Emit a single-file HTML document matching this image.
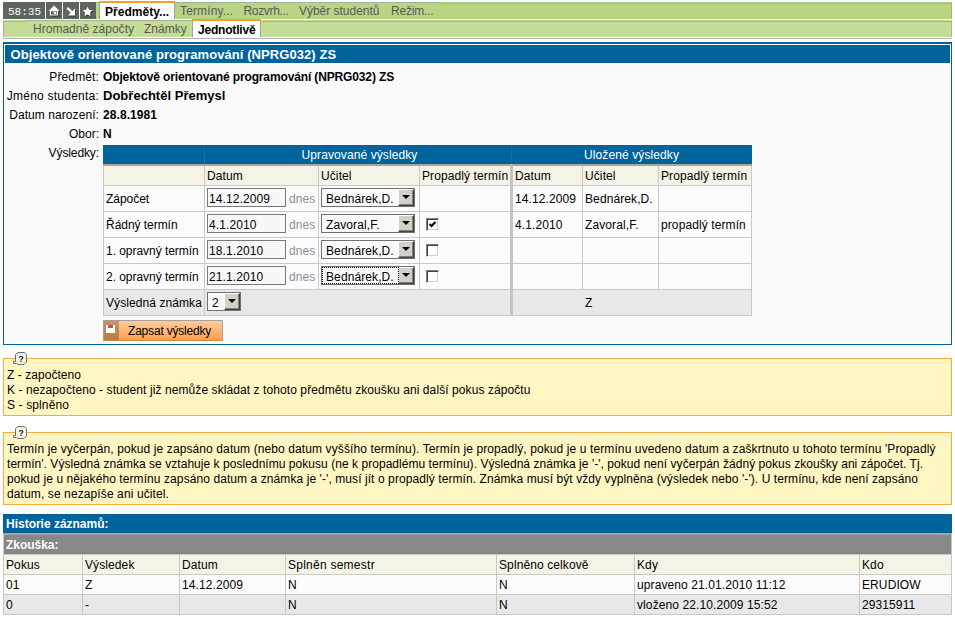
<!DOCTYPE html>
<html><head><meta charset="utf-8">
<style>
*{box-sizing:border-box;margin:0;padding:0}
html,body{width:955px;height:617px;background:#fff;overflow:hidden}
body{font-family:"Liberation Sans",sans-serif;font-size:12px;color:#000;position:relative;line-height:14px}
.abs{position:absolute}
.t{position:absolute;white-space:nowrap;line-height:14px}
.b{font-weight:bold}
/* nav */
#nav1{left:3px;top:2px;width:949px;height:17px;background:#b9d584;border-right:1px solid #9cb48c}
#nav2{left:3px;top:20px;width:949px;height:17px;background:#c4dc96;border-right:1px solid #a3bb8f}
.ib{position:absolute;top:2px;height:17px;background:#5c675c}
.navt{color:#5a5a5a;font-size:12px}
/* main box */
#box{left:3px;top:42px;width:949px;height:303px;border:1px solid #00639b;border-top-width:2px;background:#fafafa;box-shadow:inset 0 0 0 1px #fff}
#boxh{left:5px;top:45px;width:945px;height:18px;background:#00639b;outline:1px solid #fff}
/* grid */
table{border-collapse:collapse;table-layout:fixed;position:absolute}
td{border:1px solid #c8c8c8;padding:0 0 0 2px;white-space:nowrap;overflow:hidden;vertical-align:top;font-size:12px;line-height:14px;letter-spacing:0.1px}
#g1 td{height:26px;background:#fcfcfc;padding-top:6px}
#g1 tr.h td{height:19px;background:#00639b;color:#fff;text-align:center;border-color:#00639b;border-bottom-color:#aca4a0;padding:2px 0 0 0}
#g1 tr.s td{height:21px;background:#f5f2e6;padding-top:4px}
#g1 tr.l td{background:#e8e8e8}
#g1 td.sep{border-left:3px solid #c4c4c4}
.inp{display:inline-block;vertical-align:top;margin-top:-4px;width:79px;height:19px;border:1px solid #787878;background:#f8f8f8;padding:3px 0 0 1px;line-height:14px}
.dn{color:#8c8ca0;margin-left:3px}
.sel{display:inline-block;vertical-align:top;margin-top:-4px;position:relative;height:19px;border:1px solid #707070;background:#fafafa;padding:3px 0 0 4px;line-height:14px}
.sel i{position:absolute;right:0px;top:0px;width:16px;height:17px;background:#d4d0c8;border:1px solid #fff;border-right-color:#404040;border-bottom-color:#404040;box-shadow:inset -1px -1px 0 #808080}
.sel i:after{content:"";position:absolute;left:3px;top:5px;border:4px solid transparent;border-top-color:#000;border-bottom-width:0}
.cb{display:inline-block;width:13px;height:13px;border:1px solid #808080;border-right-color:#fff;border-bottom-color:#fff;box-shadow:inset 1px 1px 0 #404040,inset -1px -1px 0 #d4d0c8;background:#fff;vertical-align:top;margin:0 0 0 4px;position:relative}
/* info */
.yb{left:3px;width:949px;background:#fff6c4;border:1px solid #ffa742}
#g2 td{height:20px;padding:3px 0 0 2px}
#g2 tr.s td{background:#f5f2e6}
#g2 tr.a td{background:#fcfcfc}
#g2 tr.e td{background:#e8e8e8}
.ln{position:absolute;height:1px;background:#9db39d}
#g1 td:first-child{letter-spacing:-0.04px}
</style></head><body>


<!-- top nav -->
<div id="nav1" class="abs"></div>
<div class="ln" style="left:3px;top:2px;width:436px"></div><div class="ln" style="left:439px;top:3px;width:513px"></div>
<div class="abs" style="left:3px;top:2px;width:93px;height:17px;background:#fff"></div>
<div class="ib" style="left:3px;width:42px"></div>
<div class="ib" style="left:46px;width:16px"></div>
<div class="ib" style="left:63px;width:16px"></div>
<div class="ib" style="left:80px;width:16px"></div>
<svg class="abs" style="left:46px;top:2px" width="16" height="17" viewBox="0 0 16 17"><path d="M8.9 4.6 L14.4 10 L13 10 L13 14.6 L5 14.6 L5 10 L3.8 10 Z" fill="#2b302b"/><path d="M8.1 3.5 L13.5 9 L12.1 9 L12.1 13.6 L4 13.6 L4 9 L2.6 9 Z" fill="#fff"/><rect x="5" y="9.2" width="6" height="3.4" fill="#5c675c"/><rect x="7.8" y="9.9" width="2.4" height="2.2" fill="#fff"/></svg>
<svg class="abs" style="left:63px;top:2px" width="16" height="17" viewBox="0 0 16 17"><g transform="translate(0.8,0.9)" fill="#2b302b"><path d="M3.5 6.7 L5.2 5 L9.8 9.6 L8.1 11.3 Z"/><path d="M12.1 6.6 L12.1 13.6 L5 13.6 Z"/></g><g fill="#fff"><path d="M3.5 6.7 L5.2 5 L9.8 9.6 L8.1 11.3 Z"/><path d="M12.1 6.6 L12.1 13.6 L5 13.6 Z"/></g></svg>
<svg class="abs" style="left:80px;top:2px" width="16" height="17" viewBox="0 0 16 17"><path d="M8.40 5.70 L9.93 8.70 L13.25 9.22 L10.87 11.60 L11.40 14.93 L8.40 13.40 L5.40 14.93 L5.93 11.60 L3.55 9.22 L6.87 8.70 Z" fill="#2b302b"/><path d="M7.60 4.80 L9.13 7.80 L12.45 8.32 L10.07 10.70 L10.60 14.03 L7.60 12.50 L4.60 14.03 L5.13 10.70 L2.75 8.32 L6.07 7.80 Z" fill="#fff"/></svg>
<div class="abs" style="left:99px;top:1px;width:76px;height:18px;background:#fff;border-top:2px solid #f0a030;border-left:1px solid #9aa59a;border-right:1px solid #9aa59a"></div>

<div id="nav2" class="abs"></div>
<div class="ln" style="left:3px;top:21px;width:24px"></div><div class="ln" style="left:27px;top:20px;width:166px"></div><div class="ln" style="left:262px;top:21px;width:690px"></div><div class="abs" style="left:3px;top:21px;width:1px;height:16px;background:#9db39d"></div>
<div class="abs" style="left:192px;top:19px;width:69px;height:18px;background:#fff;border-top:2px solid #f0a030;border-left:1px solid #9aa59a;border-right:1px solid #9aa59a"></div>
<div class="abs" style="left:3px;top:38px;width:949px;height:1px;background:#b0b0b0"></div>

<!-- main box -->
<div id="box" class="abs"></div>
<div id="boxh" class="abs"></div>


<table id="g1" style="left:103px;top:145px;width:648px">
<colgroup><col style="width:101px"><col style="width:114px"><col style="width:101px"><col style="width:92px"><col style="width:71px"><col style="width:76px"><col style="width:93px"></colgroup>
<tr class="h"><td style="border-right-color:#0a74aa"></td><td colspan="3" style="border-right-color:#0a74aa;padding-left:3px">Upravované výsledky</td><td colspan="3">Uložené výsledky</td></tr>
<tr class="s"><td></td><td>Datum</td><td>Učitel</td><td>Propadlý termín</td><td class="sep">Datum</td><td>Učitel</td><td>Propadlý termín</td></tr>
<tr><td>Zápočet</td><td><span class="inp">14.12.2009</span><span class="dn">dnes</span></td><td><span class="sel" style="width:94px">Bednárek,D.<i></i></span></td><td></td><td class="sep">14.12.2009</td><td>Bednárek,D.</td><td></td></tr>
<tr><td>Řádný termín</td><td><span class="inp">4.1.2010</span><span class="dn">dnes</span></td><td><span class="sel" style="width:94px">Zavoral,F.<i></i></span></td><td><span class="cb"><svg style="position:absolute;left:1px;top:1px" width="9" height="9" viewBox="0 0 9 9"><path d="M1.5 4 L3.5 6 L7.5 2" stroke="#000" stroke-width="2" fill="none"/></svg></span></td><td class="sep">4.1.2010</td><td>Zavoral,F.</td><td>propadlý termín</td></tr>
<tr><td>1. opravný termín</td><td><span class="inp">18.1.2010</span><span class="dn">dnes</span></td><td><span class="sel" style="width:94px">Bednárek,D.<i></i></span></td><td><span class="cb"></span></td><td class="sep"></td><td></td><td></td></tr>
<tr><td>2. opravný termín</td><td><span class="inp">21.1.2010</span><span class="dn">dnes</span></td><td><span class="sel" style="width:94px">Bednárek,D.<i></i><b style="position:absolute;left:0;top:0;width:77px;height:17px;border:1px dotted #000"></b></span></td><td><span class="cb"></span></td><td class="sep"></td><td></td><td></td></tr>
<tr class="l"><td style="letter-spacing:0.08px">Výsledná známka</td><td colspan="3"><span class="sel" style="width:34px">2<i></i></span></td><td class="sep" colspan="3" style="padding-left:72px">Z</td></tr>
</table>

<div class="abs" style="left:103px;top:165px;width:649px;height:1px;background:#aca4a0"></div>
<!-- button -->
<div class="abs" style="left:103px;top:320px;width:120px;height:21px;border:1px solid #a8a098;border-bottom-color:#d08848;background:linear-gradient(#ffcc9c,#ffa050)"></div>
<div class="abs" style="left:104px;top:321px;width:15px;height:19px;background:linear-gradient(#c89468,#b87c44)"></div>
<svg class="abs" style="left:106px;top:325px" width="9" height="8" viewBox="0 0 9 8"><rect x="0" y="0" width="9" height="8" fill="#fff"/><rect x="2" y="0" width="5" height="3" fill="#a06848"/><rect x="1" y="1" width="7" height="0" fill="#fff"/></svg>

<!-- yellow boxes -->
<div class="abs yb" style="top:358px;height:58px"></div>
<svg class="abs" style="left:13px;top:352px" width="15" height="14" viewBox="0 0 15 14"><path d="M5 0.5 H11.5 L13.5 2.5 V10 L11 12.5 H5 L3.5 11.5 H0.5 V9.5 H2.5 V2.5 Z" fill="#f0f5e2" stroke="#687078" stroke-width="1"/><text x="8.2" y="10" font-family="Liberation Sans" font-weight="bold" font-size="8.5" text-anchor="middle" fill="#222">?</text></svg>

<div class="abs yb" style="top:432px;height:73px"></div>
<svg class="abs" style="left:13px;top:426px" width="15" height="14" viewBox="0 0 15 14"><path d="M5 0.5 H11.5 L13.5 2.5 V10 L11 12.5 H5 L3.5 11.5 H0.5 V9.5 H2.5 V2.5 Z" fill="#f0f5e2" stroke="#687078" stroke-width="1"/><text x="8.2" y="10" font-family="Liberation Sans" font-weight="bold" font-size="8.5" text-anchor="middle" fill="#222">?</text></svg>

<!-- history -->
<div class="abs" style="left:3px;top:514px;width:949px;height:19px;background:#00639b"></div>
<div class="abs" style="left:3px;top:533px;width:949px;height:21px;background:#888;border-top:2px solid #aca4a0;border-left:1px solid #c8c8c8;border-right:1px solid #c8c8c8"></div>
<table id="g2" style="left:3px;top:554px;width:948px">
<colgroup><col style="width:79px"><col style="width:97px"><col style="width:106px"><col style="width:211px"><col style="width:138px"><col style="width:225px"><col style="width:92px"></colgroup>
<tr class="s"><td>Pokus</td><td>Výsledek</td><td>Datum</td><td style="letter-spacing:0.25px">Splněn semestr</td><td>Splněno celkově</td><td>Kdy</td><td>Kdo</td></tr>
<tr class="a"><td>01</td><td>Z</td><td>14.12.2009</td><td>N</td><td>N</td><td>upraveno 21.01.2010 11:12</td><td>ERUDIOW</td></tr>
<tr class="e"><td>0</td><td>-</td><td></td><td>N</td><td>N</td><td>vloženo 22.10.2009 15:52</td><td>29315911</td></tr>
</table>


<div class="t" style="left:8px;top:6px;font-size:11px;color:#fff;font-family:'Liberation Mono',monospace;line-height:12px">58:35</div>
<div class="t b" style="left:105px;top:5px;letter-spacing:0.035px;">Předměty...</div>
<div class="t" style="left:180px;top:4px;letter-spacing:0.14px;color:#585858">Termíny...</div>
<div class="t" style="left:243.5px;top:4px;letter-spacing:-0.335px;color:#585858">Rozvrh...</div>
<div class="t" style="left:299px;top:4px;letter-spacing:-0.023px;color:#585858">Výběr studentů</div>
<div class="t" style="left:391px;top:4px;letter-spacing:-0.189px;color:#585858">Režim...</div>
<div class="t" style="left:33px;top:22px;letter-spacing:0.018px;color:#585858">Hromadně zápočty</div>
<div class="t" style="left:144px;top:22px;letter-spacing:0.002px;color:#585858">Známky</div>
<div class="t b" style="left:198px;top:23px;letter-spacing:-0.196px;">Jednotlivě</div>
<div class="t b" style="left:10.5px;top:48px;font-size:13px;letter-spacing:0.074px;color:#fff">Objektově orientované programování (NPRG032) ZS</div>
<div class="t" style="left:49.3px;top:70px;letter-spacing:0.127px;">Předmět:</div>
<div class="t b" style="left:103px;top:70px;letter-spacing:-0.136px;">Objektově orientované programování (NPRG032) ZS</div>
<div class="t" style="left:6.8px;top:89px;letter-spacing:0.231px;">Jméno studenta:</div>
<div class="t b" style="left:103px;top:89px;font-size:13px;letter-spacing:0.016px;">Dobřechtěl Přemysl</div>
<div class="t" style="left:9.2px;top:108px;letter-spacing:0.072px;">Datum narození:</div>
<div class="t b" style="left:103px;top:108px;letter-spacing:0.068px;">28.8.1981</div>
<div class="t" style="left:69px;top:127px;letter-spacing:-0.003px;">Obor:</div>
<div class="t b" style="left:103px;top:127px;">N</div>
<div class="t" style="left:48.6px;top:146px;letter-spacing:-0.107px;">Výsledky:</div>
<div class="t" style="left:128px;top:324px;letter-spacing:-0.19px;">Zapsat výsledky</div>
<div class="t" style="left:7px;top:368px;letter-spacing:0.048px;">Z - započteno</div>
<div class="t" style="left:7px;top:383px;letter-spacing:0.084px;">K - nezapočteno - student již nemůže skládat z tohoto předmětu zkoušku ani další pokus zápočtu</div>
<div class="t" style="left:7px;top:398px;letter-spacing:0.118px;">S - splněno</div>
<div class="t" style="left:7px;top:442px;letter-spacing:0.105px;">Termín je vyčerpán, pokud je zapsáno datum (nebo datum vyššího termínu). Termín je propadlý, pokud je u termínu uvedeno datum a zaškrtnuto u tohoto termínu 'Propadlý</div>
<div class="t" style="left:7px;top:457px;letter-spacing:0.042px;">termín'. Výsledná známka se vztahuje k poslednímu pokusu (ne k propadlému termínu). Výsledná známka je '-', pokud není vyčerpán žádný pokus zkoušky ani zápočet. Tj.</div>
<div class="t" style="left:7px;top:472px;letter-spacing:0.081px;">pokud je u nějakého termínu zapsáno datum a známka je '-', musí jít o propadlý termín. Známka musí být vždy vyplněna (výsledek nebo '-'). U termínu, kde není zapsáno</div>
<div class="t" style="left:7px;top:487px;letter-spacing:0.108px;">datum, se nezapíše ani učitel.</div>
<div class="t b" style="left:6px;top:517px;letter-spacing:-0.011px;color:#fff">Historie záznamů:</div>
<div class="t b" style="left:6px;top:538px;letter-spacing:-0.023px;color:#fff">Zkouška:</div>

</body></html>
